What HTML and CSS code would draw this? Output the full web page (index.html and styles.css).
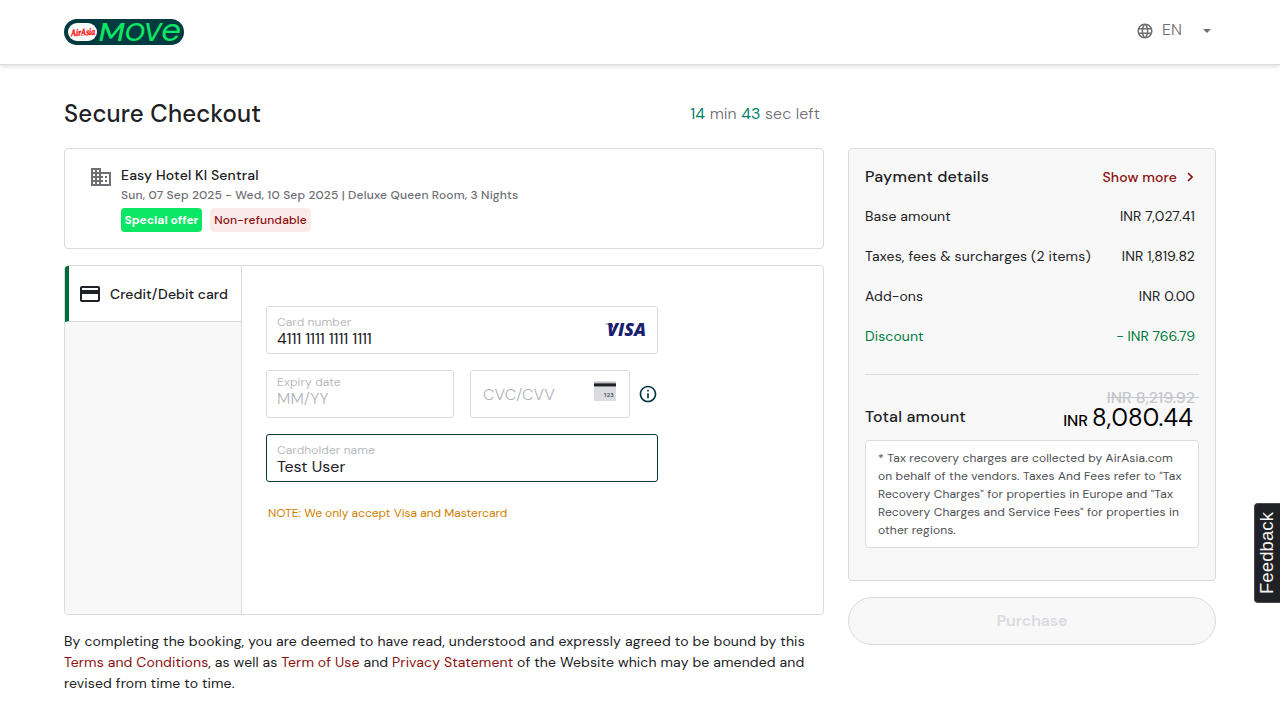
FILE: index.html
```html
<!DOCTYPE html>
<html lang="en">
<head>
<meta charset="utf-8">
<title>Secure Checkout</title>
<link rel="stylesheet" href="styles.css">
</head>
<body>
<header class="header">
  <svg class="logo" width="120" height="26" viewBox="0 0 120 26" role="img" aria-label="AirAsia MOVE">
    <rect width="120" height="26" rx="13" fill="#033a3f"/>
    <rect x="4" y="4" width="29" height="18" rx="9" fill="#fff"/>
    <text class="logo-brand" x="7" y="16.500" textLength="24" lengthAdjust="spacingAndGlyphs" transform="rotate(-4 19 13)">AirAsia</text>
    <g class="logo-word">
      <text x="34.500" y="21.500" textLength="26" lengthAdjust="spacingAndGlyphs">M</text>
      <text x="60.500" y="21.500" textLength="20.500" lengthAdjust="spacingAndGlyphs">O</text>
      <text x="79.500" y="21.500" textLength="18" lengthAdjust="spacingAndGlyphs">V</text>
      <text class="logo-e" x="97" y="21.500" textLength="20" lengthAdjust="spacingAndGlyphs">e</text>
    </g>
  </svg>
  <div class="language">
    <svg width="18" height="18" viewBox="0 0 24 24" fill="#6e6e73"><path d="M11.99 2C6.47 2 2 6.48 2 12s4.47 10 9.99 10C17.52 22 22 17.52 22 12S17.52 2 11.99 2zm6.93 6h-2.95c-.32-1.25-.78-2.45-1.38-3.56 1.84.63 3.37 1.91 4.33 3.56zM12 4.04c.83 1.2 1.48 2.53 1.91 3.96h-3.82c.43-1.43 1.08-2.76 1.91-3.96zM4.26 14C4.1 13.36 4 12.69 4 12s.1-1.36.26-2h3.38c-.08.66-.14 1.32-.14 2s.06 1.34.14 2H4.26zm.82 2h2.95c.32 1.25.78 2.45 1.38 3.56-1.84-.63-3.37-1.9-4.33-3.56zm2.95-8H5.08c.96-1.66 2.49-2.93 4.33-3.56C8.81 5.55 8.35 6.75 8.03 8zM12 19.96c-.83-1.2-1.48-2.53-1.91-3.96h3.82c-.43 1.43-1.08 2.76-1.91 3.96zM14.34 14H9.66c-.09-.66-.16-1.32-.16-2s.07-1.35.16-2h4.68c.09.65.16 1.32.16 2s-.07 1.34-.16 2zm.25 5.56c.6-1.11 1.06-2.31 1.38-3.56h2.95c-.96 1.65-2.49 2.93-4.33 3.56zM16.36 14c.08-.66.14-1.32.14-2s-.06-1.34-.14-2h3.38c.16.64.26 1.31.26 2s-.1 1.36-.26 2h-3.38z"/></svg>
    <span class="language-code">EN</span>
    <svg width="8" height="4" viewBox="0 0 8 4" fill="#6e6e73"><path d="M0 0h8L4 4z"/></svg>
  </div>
</header>

<main class="page">
  <section class="checkout">
    <div class="heading">
      <h1 class="title">Secure Checkout</h1>
      <div class="timer"><b>14</b> min <b>43</b> sec left</div>
    </div>

    <div class="hotel">
      <svg class="hotel-icon" width="24" height="24" viewBox="0 0 24 24" fill="#6e6e73"><path d="M12 7V3H2v18h20V7H12zM6 19H4v-2h2v2zm0-4H4v-2h2v2zm0-4H4V9h2v2zm0-4H4V5h2v2zm4 12H8v-2h2v2zm0-4H8v-2h2v2zm0-4H8V9h2v2zm0-4H8V5h2v2zm10 12h-8v-2h2v-2h-2v-2h2v-2h-2V9h8v10zm-2-8h-2v2h2v-2zm0 4h-2v2h2v-2z"/></svg>
      <div>
        <div class="hotel-name">Easy Hotel Kl Sentral</div>
        <div class="hotel-stay">Sun, 07 Sep 2025 - Wed, 10 Sep 2025 | Deluxe Queen Room, 3 Nights</div>
        <div class="tags"><span class="tag offer">Special offer</span><span class="tag strict">Non-refundable</span></div>
      </div>
    </div>

    <div class="methods">
      <div class="tabs">
        <div class="tab">
          <svg width="24" height="24" viewBox="0 0 24 24" fill="#202124"><path d="M20 4H4c-1.11 0-1.99.89-1.99 2L2 18c0 1.11.89 2 2 2h16c1.11 0 2-.89 2-2V6c0-1.11-.89-2-2-2zm0 14H4v-6h16v6zm0-10H4V6h16v2z"/></svg>
          <span class="tab-label">Credit/Debit card</span>
        </div>
      </div>
      <div class="form">
        <div class="field">
          <div><div class="label">Card number</div><div class="value card-digits">4111 1111 1111 1111</div></div>
          <svg class="card-brand" width="42" height="18" viewBox="0 0 42 18"><text class="visa" x="3" y="15" textLength="39" lengthAdjust="spacingAndGlyphs">VISA</text><path d="M1 2.700h7.500l1 5C8.300 5 5.500 3.400 1 2.900z" fill="#1a1f71"/></svg>
        </div>
        <div class="field-row">
          <div class="field expiry">
            <div><div class="label">Expiry date</div><div class="value empty">MM/YY</div></div>
          </div>
          <div class="field cvc">
            <div class="value empty cvc-label">CVC/CVV</div>
            <svg width="22" height="20" viewBox="0 0 22 20"><rect width="22" height="20" rx="1.500" fill="#dadbdf"/><rect y="1.500" width="22" height="4.500" fill="#a5a6ab"/><rect y="2.500" width="22" height="2.700" fill="#202124"/><text class="cvc-digits" x="9.500" y="15.500" textLength="10" lengthAdjust="spacingAndGlyphs">123</text></svg>
          </div>
          <svg class="info" width="20" height="20" viewBox="0 0 24 24" fill="#033a3f"><path d="M11 7h2v2h-2zm0 4h2v6h-2zm1-9C6.480 2 2 6.480 2 12s4.480 10 10 10 10-4.480 10-10S17.520 2 12 2zm0 18c-4.410 0-8-3.590-8-8s3.590-8 8-8 8 3.590 8 8-3.590 8-8 8z"/></svg>
        </div>
        <div class="field focused">
          <div><div class="label">Cardholder name</div><div class="value">Test User</div></div>
        </div>
        <div class="note">NOTE: We only accept Visa and Mastercard</div>
      </div>
    </div>

    <p class="terms">By completing the booking, you are deemed to have read, understood and expressly agreed to be bound by this<br><span class="terms-links"><a>Terms and Conditions</a>, as well as <a>Term of Use</a> and <a>Privacy Statement</a> of the Website which may be amended and<br>revised from time to time.</span></p>
  </section>

  <aside class="summary">
    <div class="payment">
      <div class="payment-head">
        <h2 class="payment-title">Payment details</h2>
        <div class="more"><span>Show more</span><svg width="6" height="10" viewBox="0 0 6 10" fill="none" stroke="#8c0f0f" stroke-width="1.600"><path d="M1 1l4 4-4 4"/></svg></div>
      </div>
      <div class="line"><span>Base amount</span><span class="amount">INR 7,027.41</span></div>
      <div class="line"><span class="taxes">Taxes, fees &amp; surcharges (2 items)</span><span class="amount">INR 1,819.82</span></div>
      <div class="line"><span>Add-ons</span><span class="amount">INR 0.00</span></div>
      <div class="line discount"><span>Discount</span><span class="deduction">- INR 766.79</span></div>
      <div class="total">
        <h2 class="total-title">Total amount</h2>
        <div class="total-price">
          <div class="old-price">INR 8,219.92&nbsp;</div>
          <div class="new-price"><span class="currency">INR</span><span class="sum">8,080.44</span></div>
        </div>
      </div>
      <div class="tax-note">* Tax recovery charges are collected by AirAsia.com<br>on behalf of the vendors. Taxes And Fees refer to "Tax<br>Recovery Charges" for properties in Europe and "Tax<br>Recovery Charges and Service Fees" for properties in<br>other regions.</div>
    </div>
    <button class="purchase" disabled>Purchase</button>
  </aside>
</main>
<div class="feedback"><span>Feedback</span></div>
</body>
</html>
```
FILE: styles.css
```css
* { box-sizing: border-box; }
body { margin: 0; height: 720px; overflow: hidden; background: #fff; color: #202124; font-family: "DM Sans", Inter, "Liberation Sans", sans-serif; font-size: 14px; }
h1, h2, p { margin: 0; font-weight: 500; }

.header { height: 65px; padding: 0 69px 3px 64px; display: flex; align-items: center; justify-content: space-between; border-bottom: 1px solid #ddd; box-shadow: 0 1px 5px rgba(0,0,0,.16); }
.logo { display: block; margin-top: 3px; overflow: visible; }
.logo-brand { font: italic 700 10px "Liberation Serif", serif; fill: #f00; stroke: #f00; stroke-width: .3px; }
.logo-word { font-family: "DM Sans", Inter, sans-serif; font-size: 25px; font-style: italic; font-weight: 500; fill: #0be764; }
.logo-e { font-size: 32px; font-weight: 400; }
.language { display: flex; align-items: center; color: #6e6e73; }
.language-code { width: 41px; margin: 0 0 2px 8px; font-size: 16px; line-height: 20px; font-weight: 300; }

.page { display: flex; gap: 24px; padding: 33px 64px 0; }
.checkout { width: 760px; }
.heading { height: 50px; display: flex; justify-content: space-between; padding: 0 4px 18px 0; align-items: center; }
.title { font-size: 24px; line-height: 32px; letter-spacing: .2px; }
.timer { font-size: 16px; line-height: 20px; color: #6e6e73; font-weight: 300; letter-spacing: .1px; }
.timer b { font-weight: 400; color: #00806a; }

.hotel { height: 101px; border: 1px solid #dadbdf; border-radius: 4px; padding: 16px 24px; display: flex; gap: 8px; }
.hotel-icon { flex: none; }
.hotel-name { font-size: 14px; line-height: 20px; font-weight: 500; letter-spacing: .15px; }
.hotel-stay { font-size: 12px; line-height: 20px; font-weight: 500; color: #6e6e73; letter-spacing: .17px; white-space: nowrap; }
.tags { display: flex; gap: 8px; margin-top: 3px; }
.tag { height: 24px; border-radius: 4px; text-align: center; font-size: 12px; line-height: 24px; white-space: nowrap; }
.offer { width: 81px; background: #0be764; color: #fff; font-weight: 700; }
.strict { width: 101px; background: #faeae9; color: #8c0f0f; font-weight: 500; letter-spacing: .14px; }

.methods { height: 350px; margin-top: 16px; display: flex; border: 1px solid #dadbdf; border-radius: 4px; overflow: hidden; }
.tabs { width: 177px; background: #f8f8f8; border-right: 1px solid #dadbdf; }
.tab { height: 56px; display: flex; align-items: center; gap: 8px; background: #fff; border-left: 4px solid #006b39; border-bottom: 1px solid #dadbdf; padding-left: 9px; }
.tab-label { font-weight: 500; letter-spacing: .04px; white-space: nowrap; }
.form { width: 416px; padding: 40px 0 0 24px; display: flex; flex-direction: column; gap: 16px; }
.field { height: 48px; border: 1px solid #dadbdf; border-radius: 3px; padding: 3px 11px 0 10px; display: flex; align-items: center; justify-content: space-between; }
.focused { border-color: #033a3f; }
.card-brand { margin-bottom: 3px; overflow: visible; }
.label { font-size: 12px; line-height: 14px; color: #b9babd; letter-spacing: .1px; }
.value { font-size: 16px; line-height: 20px; white-space: nowrap; }
.card-digits { letter-spacing: -.14px; }
.empty { color: #b4b5b8; font-weight: 300; letter-spacing: .1px; }
.field-row { display: flex; align-items: center; }
.expiry { width: 188px; padding: 0 10px 4px; }
.cvc { width: 160px; margin-left: 16px; padding: 0 13px 0 12px; }
.cvc-label { padding-top: 2px; }
.cvc svg { margin-bottom: 7px; }
.info { margin-left: 8px; }
.visa { font: italic 800 17px "Open Sans", sans-serif; fill: #1a1f71; }
.cvc-digits { font: 700 6px Roboto, sans-serif; fill: #55565a; }
.note { margin: 6px 0 0 2px; font-size: 12px; line-height: 18px; color: #d08000; white-space: nowrap; letter-spacing: -.02px; }

.terms { margin-top: 16px; font-size: 14px; line-height: 21px; font-weight: 400; letter-spacing: .16px; white-space: nowrap; }
.terms-links { letter-spacing: .125px; }
.terms a { color: #8c0f0f; }

.summary { width: 368px; padding-top: 50px; }
.payment { height: 433px; border: 1px solid #dadbdf; border-radius: 4px; background: #f8f8f8; padding: 8px 16px; }
.payment-head { height: 39px; display: flex; align-items: center; justify-content: space-between; padding-right: 6px; }
.payment-title, .total-title { font-size: 16px; line-height: 24px; letter-spacing: .2px; }
.more { display: flex; align-items: center; gap: 10px; color: #8c0f0f; font-weight: 500; letter-spacing: .12px; }
.line { height: 40px; display: flex; align-items: center; justify-content: space-between; padding-right: 4px; letter-spacing: .1px; white-space: nowrap; }
.taxes { letter-spacing: .15px; }
.discount { color: #007a3d; }
.deduction { letter-spacing: 0; }
.total { height: 66px; margin-top: 18px; border-top: 1px solid #dadbdf; display: flex; justify-content: space-between; }
.total-title { margin-top: 30px; }
.total-price { padding-top: 14px; text-align: right; }
.old-price { height: 18px; font-size: 16px; line-height: 18px; font-weight: 500; color: #c5c6cb; text-decoration: line-through; }
.new-price { display: flex; align-items: baseline; justify-content: flex-end; gap: 4px; padding-right: 6px; color: #000; line-height: 22px; }
.currency { font-size: 16px; font-weight: 500; }
.sum { font-size: 24px; letter-spacing: .2px; }
.tax-note { height: 108px; border: 1px solid #dadbdf; border-radius: 4px; background: #fff; padding: 8px 12px; font-size: 12px; line-height: 18px; color: #4d4e52; letter-spacing: .14px; white-space: nowrap; }
.purchase { display: block; width: 368px; height: 48px; margin-top: 16px; padding: 0 0 2px; border: 1px solid #dadbdf; border-radius: 24px; background: #f8f8f8; color: #dadbdf; font: 600 16px "DM Sans", Inter, sans-serif; letter-spacing: -.1px; }
.feedback { position: absolute; right: 0; top: 503px; width: 26px; height: 100px; display: flex; align-items: center; justify-content: center; background: #202124; border: 1px solid #4a4b4e; border-right: 0; border-radius: 4px 0 0 4px; color: #f4f4f4; font: 18.5px "Liberation Sans", sans-serif; letter-spacing: .1px; padding-right: 1px; }
.feedback span { writing-mode: vertical-rl; transform: rotate(180deg); }
```
